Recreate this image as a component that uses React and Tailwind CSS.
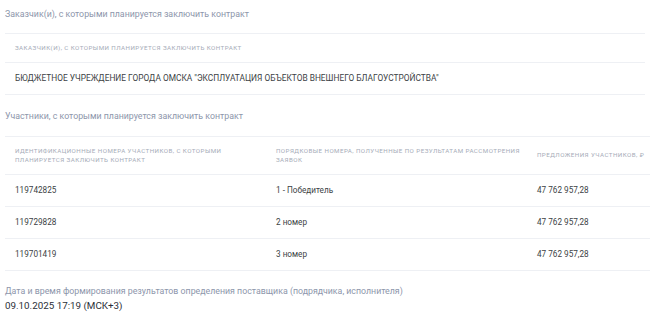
const customers = [
  'БЮДЖЕТНОЕ УЧРЕЖДЕНИЕ ГОРОДА ОМСКА "ЭКСПЛУАТАЦИЯ ОБЪЕКТОВ ВНЕШНЕГО БЛАГОУСТРОЙСТВА"',
];

const participants = [
  { id: "119742825", place: "1 - Победитель", offer: "47 762 957,28" },
  { id: "119729828", place: "2 номер", offer: "47 762 957,28" },
  { id: "119701419", place: "3 номер", offer: "47 762 957,28" },
];

function SectionLabel({ children }) {
  return <div className="text-[8.8px] leading-[12px] text-[#8d96ab]">{children}</div>;
}

function HeadCell({ children }) {
  return (
    <div className="pl-[10px] pr-[6px] text-[6.2px] leading-[9px] uppercase tracking-[0.45px] text-[#a6acb8]">
      {children}
    </div>
  );
}

export default function App() {
  return (
    <div
      className="w-[650px] h-[325px] overflow-hidden bg-white px-[5px]"
      style={{ fontFamily: "Roboto, 'Noto Sans', sans-serif" }}
    >
      <div className="pt-[8px]">
        <SectionLabel>Заказчик(и), с которыми планируется заключить контракт</SectionLabel>
      </div>

      <div className="mt-[13px] border-t border-[#eef0f4]">
        <div className="h-[29px] flex items-center border-b border-[#eef0f4]">
          <HeadCell>Заказчик(и), с которыми планируется заключить контракт</HeadCell>
        </div>
        {customers.map((c) => (
          <div key={c} className="h-[32px] flex items-center border-b border-[#eef0f4] pl-[10px] text-[8.35px] text-[#3c3f45]">
            {c}
          </div>
        ))}
      </div>

      <div className="pt-[15px]">
        <SectionLabel>Участники, с которыми планируется заключить контракт</SectionLabel>
      </div>

      <div className="mt-[14px] border-t border-[#eef0f4] w-[800px]">
        <div className="grid grid-cols-[261px_261px_261px] h-[38px] items-center border-b border-[#eef0f4]">
          <HeadCell>Идентификационные номера участников, с которыми планируется заключить контракт</HeadCell>
          <HeadCell>Порядковые номера, полученные по результатам рассмотрения заявок</HeadCell>
          <HeadCell>Предложения участников, ₽</HeadCell>
        </div>
        {participants.map((p) => (
          <div
            key={p.id}
            className="grid grid-cols-[261px_261px_261px] h-[32px] items-center border-b border-[#eef0f4] text-[8.2px] text-[#3c3f45]"
          >
            <div className="pl-[10px]">{p.id}</div>
            <div className="pl-[10px]">{p.place}</div>
            <div className="pl-[10px]">{p.offer}</div>
          </div>
        ))}
      </div>

      <div className="pt-[14px]">
        <SectionLabel>Дата и время формирования результатов определения поставщика (подрядчика, исполнителя)</SectionLabel>
        <div className="mt-[2px] text-[9.8px] leading-[14px] text-[#2b2f38]">09.10.2025 17:19 (МСК+3)</div>
      </div>
    </div>
  );
}
